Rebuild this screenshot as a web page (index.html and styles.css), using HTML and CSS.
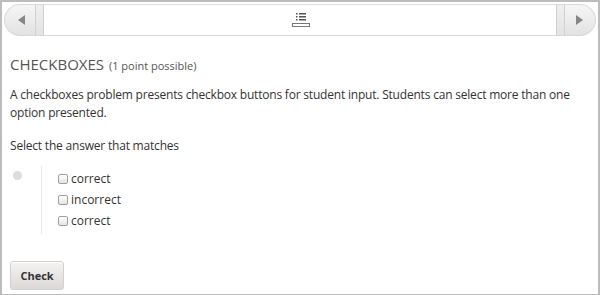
FILE: index.html
```html
<!DOCTYPE html>
<html>
  <head>
    <title>Checkboxes</title>
    <link rel="stylesheet" href="styles.css">
  </head>
  <body>
    <div class="frame">
      <div class="seq-nav">
        <div class="nav-btn nav-prev"><span class="arrow arrow-left"></span></div>
        <div class="nav-strip"></div>
        <div class="nav-items">
          <svg class="nav-icon" width="18" height="16" viewBox="0 0 18 16">
            <rect x="4" y="1" width="1.5" height="1.5" fill="#555" />
            <rect x="7" y="1" width="7" height="1.5" fill="#555" />
            <rect x="4" y="4" width="1.5" height="1.5" fill="#555" />
            <rect x="7" y="4" width="7" height="1.5" fill="#555" />
            <rect x="4" y="7" width="1.5" height="1.5" fill="#555" />
            <rect x="7" y="7" width="7" height="1.5" fill="#555" />
            <rect x="0.5" y="11.5" width="17" height="3" fill="#fff" stroke="#777" />
          </svg>
        </div>
        <div class="nav-strip"></div>
        <div class="nav-btn nav-next"><span class="arrow arrow-right"></span></div>
      </div>

      <div class="problem">
        <h2 class="problem-title">CHECKBOXES <span class="points">(1 point possible)</span></h2>
        <p>A checkboxes problem presents checkbox buttons for student input. Students can select more than one option presented.</p>
        <p>Select the answer that matches</p>

        <div class="choice-group">
          <span class="status"></span>
          <fieldset class="choices">
            <label><input type="checkbox" name="choice" value="0" /> correct</label>
            <label><input type="checkbox" name="choice" value="1" /> incorrect</label>
            <label><input type="checkbox" name="choice" value="2" /> correct</label>
          </fieldset>
        </div>

        <button class="check-btn">Check</button>
      </div>
    </div>
  </body>
</html>
```

FILE: styles.css
```css
body {
  margin: 0;
  font-family: "Open Sans", "DejaVu Sans", sans-serif;
  color: #333;
  background-color: #fff;
}

.frame {
  width: 600px;
  height: 295px;
  box-sizing: border-box;
  border: 2px solid #bcbcbc;
  border-bottom-width: 1px;
  overflow: hidden;
}

/* sequence navigation */
.seq-nav {
  display: flex;
  height: 32px;
  margin: 2px 2px 0 2px;
}

.nav-btn {
  width: 28px;
  display: flex;
  align-items: center;
  justify-content: center;
  background: linear-gradient(#f6f6f6, #e2e2e2);
  border: 1px solid #d8d8d8;
}

.nav-prev {
  border-radius: 16px 0 0 16px;
  border-right: none;
  padding-left: 2px;
}

.nav-next {
  border-radius: 0 16px 16px 0;
  border-left: none;
  padding-right: 2px;
}

.nav-strip {
  width: 7px;
  background: linear-gradient(#efefef, #e3e3e3);
  border-top: 1px solid #d8d8d8;
  border-bottom: 1px solid #d8d8d8;
  border-left: 1px solid #d0d0d0;
  border-right: 1px solid #d0d0d0;
}

.arrow {
  width: 0;
  height: 0;
  border-top: 5px solid transparent;
  border-bottom: 5px solid transparent;
}

.arrow-left {
  border-right: 7px solid #868686;
}

.arrow-right {
  border-left: 7px solid #868686;
}

.nav-items {
  flex: 1;
  display: flex;
  align-items: center;
  justify-content: center;
  border-top: 1px solid #dcdcdc;
  border-bottom: 1px solid #dcdcdc;
  background-color: #fff;
}

.nav-icon {
  margin-left: 2px;
}

/* problem */
.problem {
  padding: 0 8px;
}

.problem-title {
  margin: 18px 0 0 0;
  font-size: 15px;
  font-weight: normal;
  color: #555;
  line-height: 20px;
}

.points {
  font-size: 11px;
  color: #555;
  margin-left: 1px;
}

.problem p {
  margin: 10px 0 0 0;
  font-size: 12px;
  letter-spacing: -0.2px;
  line-height: 18px;
  color: #333;
}

.problem p + p {
  margin-top: 15px;
}

.choice-group {
  display: flex;
  margin-top: 11px;
}

.status {
  width: 9px;
  height: 9px;
  border-radius: 50%;
  background-color: #dddddd;
  margin: 5px 0 0 3px;
}

.choices {
  margin: 0 0 0 19px;
  padding: 2px 0 3px 16px;
  border: none;
  border-left: 1px solid #e6e6e6;
  display: flex;
  flex-direction: column;
}

.choices label {
  font-size: 12px;
  line-height: 21px;
  color: #333;
  display: flex;
  align-items: center;
}

.choices input {
  appearance: none;
  width: 10px;
  height: 10px;
  margin: 0 3px 0 0;
  border: 1px solid #a0a0a0;
  border-radius: 2px;
  background: linear-gradient(#fff, #e4e4e4);
}

.check-btn {
  margin-top: 27px;
  width: 54px;
  height: 29px;
  font-family: "Open Sans", "DejaVu Sans", sans-serif;
  font-size: 11px;
  font-weight: bold;
  color: #333;
  border: 1px solid #d4d0d0;
  border-radius: 3px;
  background: linear-gradient(#f4f2f2, #dcd8d8);
  box-shadow: inset 0 1px 0 #fff;
}
```
